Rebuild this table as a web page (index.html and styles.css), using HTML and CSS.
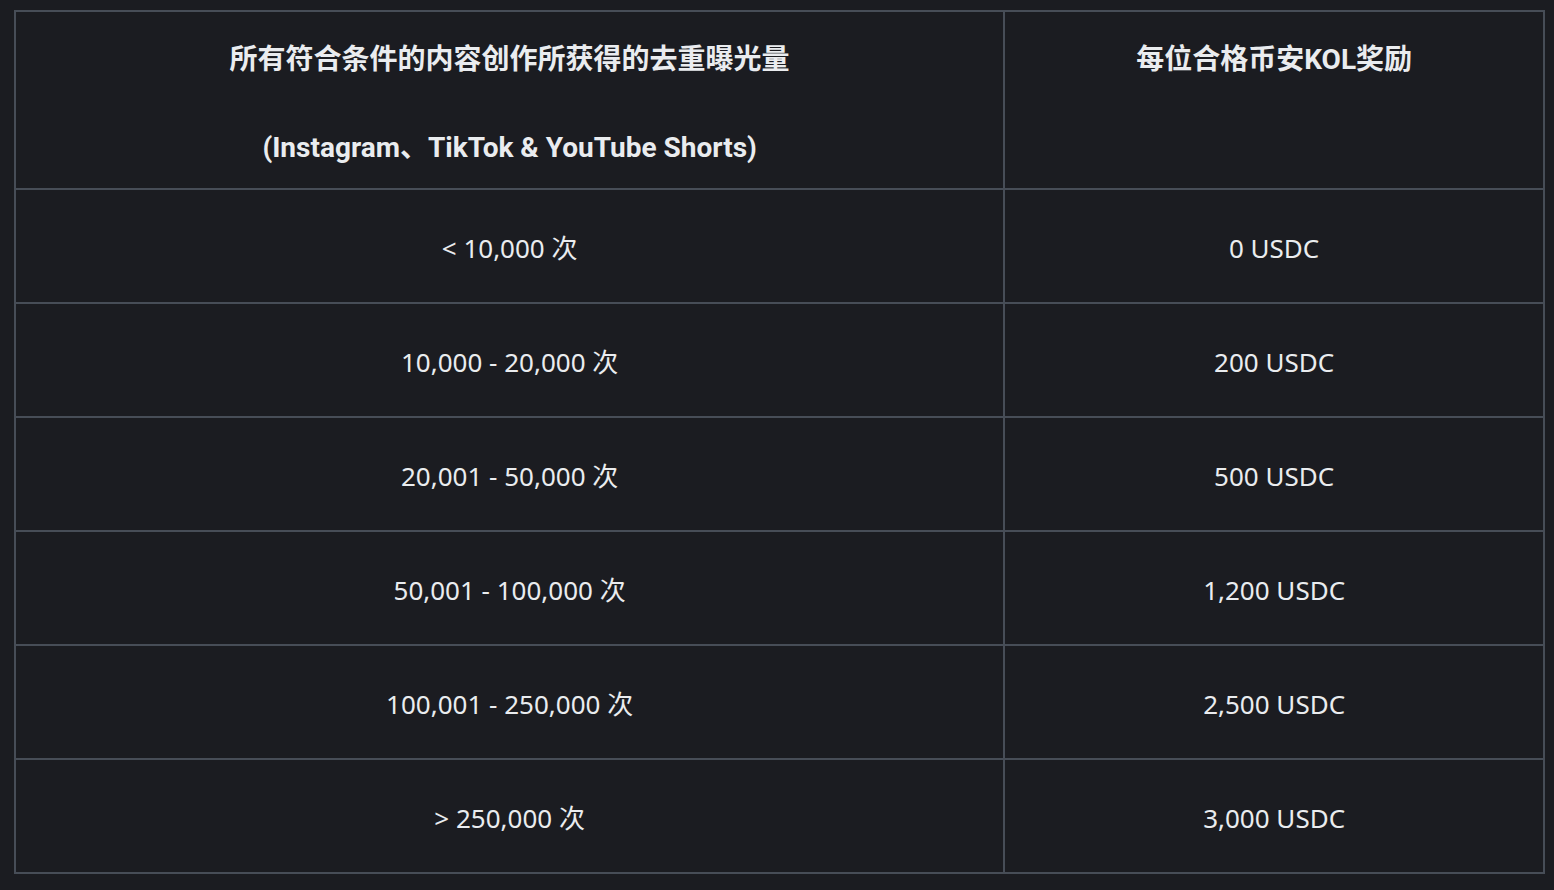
FILE: index.html
```html
<!DOCTYPE html>
<html lang="zh-CN">
<head>
  <meta charset="UTF-8">
  <meta name="viewport" content="width=device-width, initial-scale=1.0">
  <title>KOL 奖励</title>
  <link rel="stylesheet" href="styles.css">
</head>
<body>
  <main class="page">
    <table class="reward-table">
      <thead>
        <tr>
          <th class="col-views">
            <p>所有符合条件的内容创作所获得的去重曝光量</p>
            <p>(Instagram、TikTok &amp; YouTube Shorts)</p>
          </th>
          <th class="col-reward">
            <p>每位合格币安KOL奖励</p>
          </th>
        </tr>
      </thead>
      <tbody>
        <tr><td>&lt; 10,000 次</td><td>0 USDC</td></tr>
        <tr><td>10,000 - 20,000 次</td><td>200 USDC</td></tr>
        <tr><td>20,001 - 50,000 次</td><td>500 USDC</td></tr>
        <tr><td>50,001 - 100,000 次</td><td>1,200 USDC</td></tr>
        <tr><td>100,001 - 250,000 次</td><td>2,500 USDC</td></tr>
        <tr><td>&gt; 250,000 次</td><td>3,000 USDC</td></tr>
      </tbody>
    </table>
  </main>
</body>
</html>
```

FILE: styles.css
```css
/* General Styles */
html,
body {
  margin: 0;
  padding: 0;
  background-color: #1b1c21;
}

body {
  font-family: "Noto Sans", "Noto Sans CJK SC", sans-serif;
  color: #eaecef;
}

.page {
  padding: 10px 9px 0 14px;
}

/* Table */
.reward-table {
  width: 100%;
  border-collapse: collapse;
  border: 2px solid #474d57;
}

.reward-table th,
.reward-table td {
  border: 2px solid #474d57;
  text-align: center;
  padding: 0 16px;
}

.reward-table th {
  vertical-align: top;
  padding-top: 20px;
  padding-bottom: 12px;
  font-family: "Roboto", "Noto Sans CJK SC", sans-serif;
  font-size: 28px;
  font-weight: 700;
}

.reward-table th p {
  margin: 0;
  line-height: 56px;
}

.reward-table th p + p {
  margin-top: 32px;
}

.col-views {
  width: 64.7%;
}

.reward-table td {
  height: 114px;
  box-sizing: border-box;
  vertical-align: middle;
  padding-top: 4px;
  font-size: 26px;
  line-height: 36px;
}
```
